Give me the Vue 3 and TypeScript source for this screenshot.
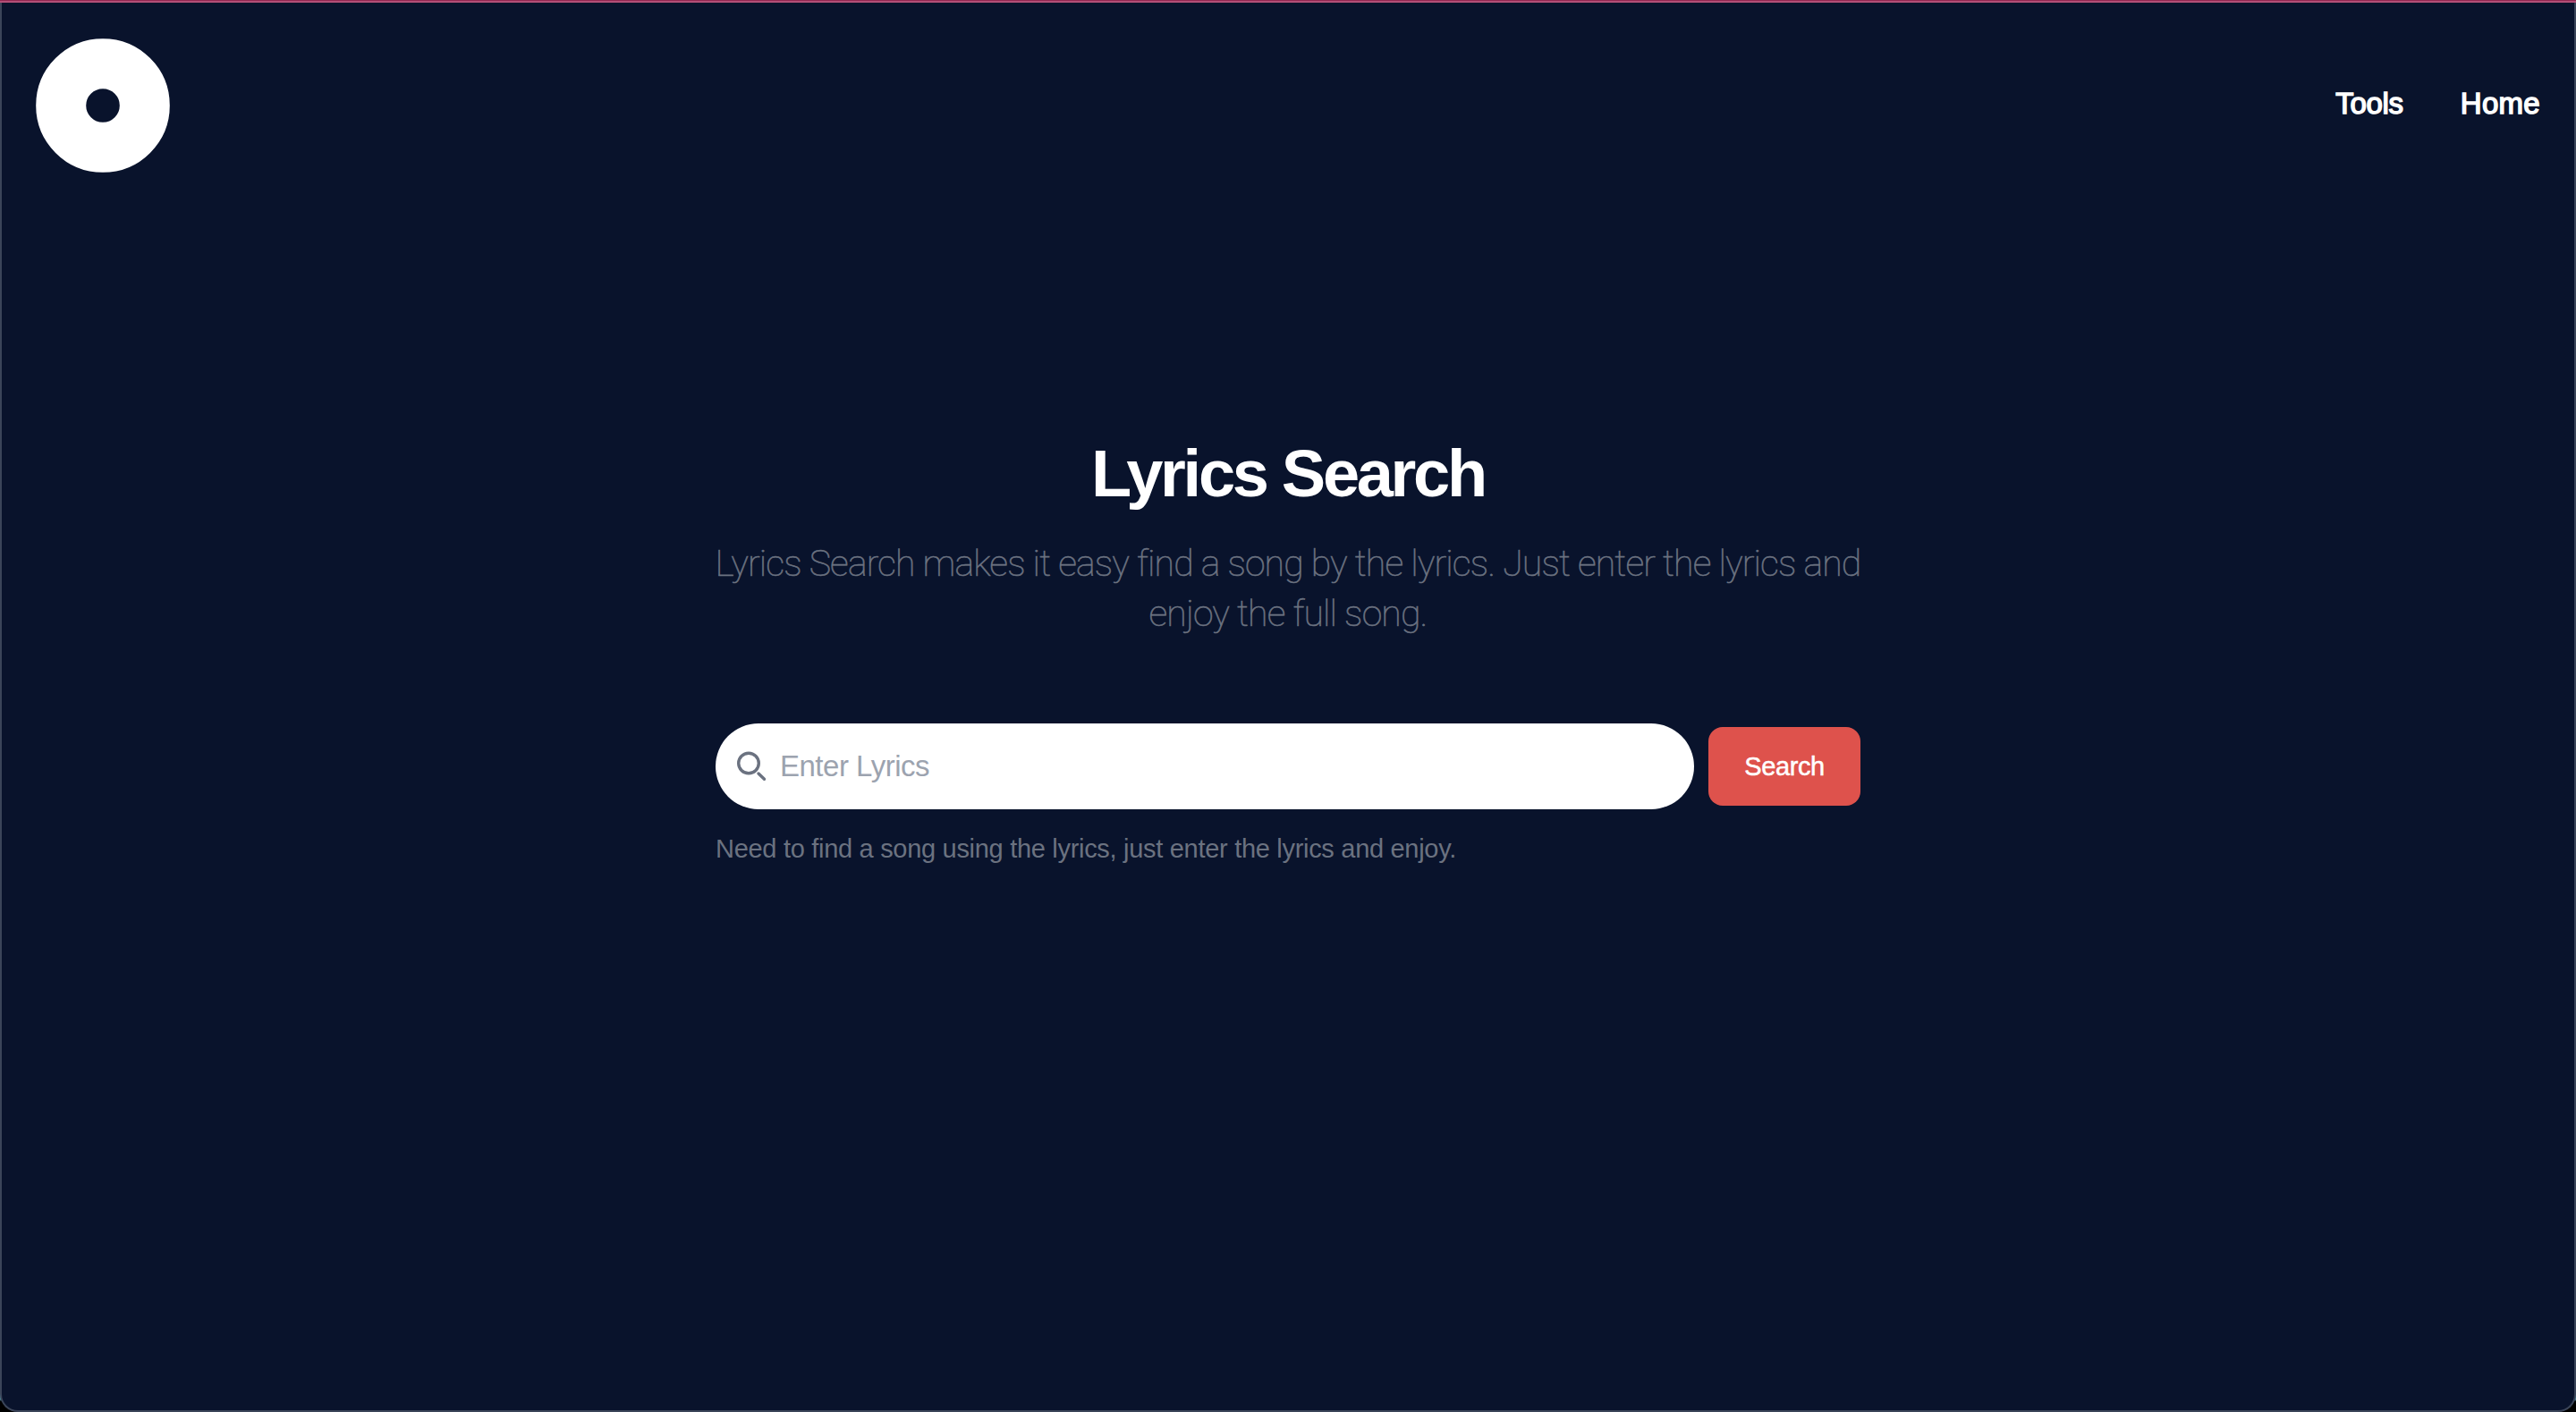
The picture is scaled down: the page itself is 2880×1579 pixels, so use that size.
<script setup lang="ts">
import { ref } from 'vue'

const links: { label: string; key: string }[] = [
  { label: 'Tools', key: 'tools' },
  { label: 'Home', key: 'home' },
]
const query = ref('')
</script>

<template>
  <div class="backdrop">
    <div class="accent"></div>
    <div class="window">
      <header class="header">
        <svg class="logo" viewBox="0 0 150 150" aria-hidden="true">
          <circle cx="75" cy="75" r="46.8" fill="none" stroke="#fff" stroke-width="56" />
        </svg>
        <nav class="nav">
          <a v-for="link in links" :key="link.key" :class="link.key">{{ link.label }}</a>
        </nav>
      </header>
      <main class="main">
        <h1 class="title">Lyrics Search</h1>
        <p class="intro">
          Lyrics Search makes it easy find a song by the lyrics. Just enter the lyrics and<br />enjoy the full song.
        </p>
        <form class="form" @submit.prevent>
          <label class="field">
            <svg class="icon" viewBox="0 0 36 36" fill="none" stroke="#6b7280" stroke-width="3.4" stroke-linecap="round" aria-hidden="true">
              <circle cx="15" cy="14.5" r="11.3" />
              <path d="M26 26l6.5 6.3" />
            </svg>
            <input v-model="query" type="text" placeholder="Enter Lyrics" />
          </label>
          <button class="submit" type="submit">Search</button>
        </form>
        <p class="hint">Need to find a song using the lyrics, just enter the lyrics and enjoy.</p>
      </main>
    </div>
  </div>
</template>

<style scoped>
.backdrop {
  height: 1579px;
  background: linear-gradient(to top, #000 12px, #4b8795 14px, #4b8795 24px, #3b4559 26px);
  font-family: "Liberation Sans", Arial, sans-serif;
}
.accent {
  box-sizing: border-box;
  height: 3px;
  border-top: 1px solid #922750;
  background: #b34f77;
}
.window {
  box-sizing: border-box;
  height: 1576px;
  background: #09132c;
  border: 2px solid #3b4559;
  border-top: 0;
  border-radius: 0 0 20px 20px;
}
.header {
  display: flex;
  align-items: center;
  justify-content: space-between;
  padding: 40px 38px 0;
}
.logo {
  width: 150px;
  height: 150px;
}
.nav {
  display: flex;
  gap: 64px;
  padding-bottom: 5px;
  font-size: 33px;
  line-height: 48px;
  color: #fff;
  -webkit-text-stroke: 1.5px #fff;
}
.tools {
  letter-spacing: -0.3px;
}
.home {
  letter-spacing: 0.3px;
}
.main {
  width: 1280px;
  margin: 297px auto 0;
}
.title {
  margin: 0;
  font-size: 74px;
  line-height: 80px;
  letter-spacing: -3.3px;
  text-align: center;
  color: #fff;
}
.intro {
  margin: 32px -10px 0;
  font: 100 41px/56px Roboto, sans-serif;
  letter-spacing: -0.87px;
  text-align: center;
  white-space: nowrap;
  color: #6b7280;
  -webkit-text-stroke: 0.6px #6b7280;
}
.form {
  display: flex;
  align-items: center;
  gap: 16px;
  margin-top: 95px;
}
.field {
  flex: 1;
  display: flex;
  align-items: center;
  gap: 14px;
  box-sizing: border-box;
  height: 96px;
  padding: 0 22px;
  border-radius: 48px;
  background: #fff;
}
.icon {
  width: 36px;
  height: 36px;
}
.field input {
  flex: 1;
  height: 48px;
  padding: 0;
  border: 0;
  outline: 0;
  background: transparent;
  font: 33px "Liberation Sans", Arial, sans-serif;
  letter-spacing: -0.5px;
  color: #111827;
}
.field input::placeholder {
  color: #9ca3af;
}
.submit {
  width: 170px;
  height: 88px;
  padding: 0;
  border: 0;
  border-radius: 16px;
  background: #de524c;
  font: 29px "Liberation Sans", Arial, sans-serif;
  letter-spacing: -0.4px;
  color: #fff;
  -webkit-text-stroke: 0.5px #fff;
}
.hint {
  margin: 24px 0 0;
  font-size: 29px;
  line-height: 40px;
  letter-spacing: -0.3px;
  color: #6b7280;
}
</style>

<style>
body {
  margin: 0;
  background: #000;
}
</style>
